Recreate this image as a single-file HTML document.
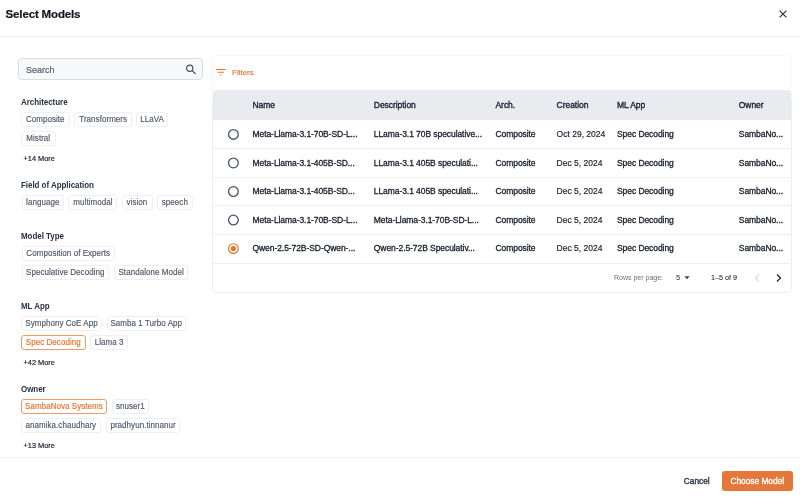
<!DOCTYPE html>
<html><head><meta charset="utf-8">
<style>
*{box-sizing:border-box;margin:0;padding:0}
html,body{width:800px;height:497px;}body{will-change:transform;overflow:hidden;background:#fff;font-family:"Liberation Sans",sans-serif;color:#101828}
div{position:absolute;white-space:nowrap}
svg{position:absolute}
.t{height:12px;line-height:12px}
.title{left:5.6px;top:7.3px;font-size:11.5px;font-weight:bold;letter-spacing:-0.15px;line-height:14px;height:14px;color:#0f1420;-webkit-text-stroke:0.2px #0f1420}
.sec{left:21px;font-size:8px;font-weight:bold;color:#273043;letter-spacing:-0.05px;transform:scaleY(1.13)}
.chip{height:15px;border:1px solid #edeff3;border-radius:3px;font-size:8px;color:#4f5869;-webkit-text-stroke:0.15px #4f5869;line-height:13px;text-align:center;letter-spacing:0.05px}
.chip.on{border-color:#eb9a6a;color:#e6732f;-webkit-text-stroke:0.15px #e6732f}
.chip span{display:block;transform:scaleY(1.13)}
.more{left:23.5px;font-size:7.4px;color:#161c2b;-webkit-text-stroke:0.18px #161c2b;transform:scaleY(1.08)}
.th{font-size:8.5px;color:#1d2230;-webkit-text-stroke:0.35px #1d2230;letter-spacing:-0.05px}
.td{font-size:8.5px;-webkit-text-stroke:0.3px #1a1f2c;letter-spacing:-0.07px;color:#1a1f2c}
.td.n{-webkit-text-stroke:0.18px #1c2130;color:#1c2130;letter-spacing:0}
.pg{font-size:7px;color:#687080}
</style></head><body>

<div class="title">Select Models</div>
<svg style="left:777.4px;top:8.2px" width="12" height="12" viewBox="0 0 12 12"><path d="M2.6 2.6L9.4 9.4M9.4 2.6L2.6 9.4" stroke="#2a3347" stroke-width="1.2" fill="none"/></svg>
<div style="left:0;top:36px;width:800px;height:1px;background:#eff0f3"></div>
<div style="left:18px;top:58px;width:184.5px;height:22px;border:1.5px solid #d9dce2;border-radius:3.5px;background:#f8f9fb"></div>
<div class="t" style="left:26px;top:63.5px;font-size:9px;color:#586174;-webkit-text-stroke:0.2px #586174;transform:scaleY(1.08)">Search</div>
<svg style="left:184px;top:63px" width="14" height="14" viewBox="0 0 14 14"><circle cx="5.7" cy="5.2" r="3.2" stroke="#465066" stroke-width="1.25" fill="none"/><path d="M8.1 7.6L11.3 10.6" stroke="#465066" stroke-width="1.3" stroke-linecap="round"/></svg>
<div class="t sec" style="top:96.50px">Architecture</div>
<div class="t sec" style="top:179.90px">Field of Application</div>
<div class="t sec" style="top:231.10px">Model Type</div>
<div class="t sec" style="top:300.50px">ML App</div>
<div class="t sec" style="top:383.50px">Owner</div>
<div class="chip" style="left:21.0px;top:111.5px;width:48.5px"><span>Composite</span></div>
<div class="chip" style="left:74.4px;top:111.5px;width:57.6px"><span>Transformers</span></div>
<div class="chip" style="left:136.3px;top:111.5px;width:31.7px"><span>LLaVA</span></div>
<div class="chip" style="left:21.0px;top:130.5px;width:34.5px"><span>Mistral</span></div>
<div class="chip" style="left:21.5px;top:194.7px;width:42.5px"><span>language</span></div>
<div class="chip" style="left:68.4px;top:194.7px;width:49.1px"><span>multimodal</span></div>
<div class="chip" style="left:121.5px;top:194.7px;width:31.0px"><span>vision</span></div>
<div class="chip" style="left:157.0px;top:194.7px;width:35.7px"><span>speech</span></div>
<div class="chip" style="left:21.5px;top:245.7px;width:93.5px"><span>Composition of Experts</span></div>
<div class="chip" style="left:21.5px;top:264.7px;width:87.6px"><span>Speculative Decoding</span></div>
<div class="chip" style="left:114.3px;top:264.7px;width:73.7px"><span>Standalone Model</span></div>
<div class="chip" style="left:21.0px;top:316.0px;width:81.0px"><span>Symphony CoE App</span></div>
<div class="chip" style="left:106.8px;top:316.0px;width:78.9px"><span>Samba 1 Turbo App</span></div>
<div class="chip on" style="left:21.0px;top:335.0px;width:64.6px"><span>Spec Decoding</span></div>
<div class="chip" style="left:90.4px;top:335.0px;width:37.6px"><span>Llama 3</span></div>
<div class="chip on" style="left:21.0px;top:398.5px;width:86.0px"><span>SambaNova Systems</span></div>
<div class="chip" style="left:111.6px;top:398.5px;width:37.4px"><span>snuser1</span></div>
<div class="chip" style="left:21.0px;top:418.0px;width:79.7px"><span>anamika.chaudhary</span></div>
<div class="chip" style="left:105.7px;top:418.0px;width:74.8px"><span>pradhyun.tinnanur</span></div>
<div class="t more" style="top:153.30px">+14 More</div>
<div class="t more" style="top:357.20px">+42 More</div>
<div class="t more" style="top:440.10px">+13 More</div>
<div style="left:212px;top:54.5px;width:580px;height:238px;border:1px solid #f7f8fa;border-radius:5px"></div>
<div style="left:212px;top:100px;width:580px;height:192.5px;border:1px solid #eceef2;border-top:none;border-radius:0 0 5px 5px"></div>
<svg style="left:214px;top:67px" width="14" height="10" viewBox="0 0 14 10"><path d="M1.9 2.5H11.6M3.4 5.3H9.9" stroke="#e4722d" stroke-width="1.05" fill="none"/><circle cx="6.75" cy="8.1" r="0.75" fill="#e4722d"/></svg>
<div class="t" style="left:232px;top:67px;font-size:8px;color:#e4722d;-webkit-text-stroke:0.15px #e4722d">Filters</div>
<div style="left:213px;top:90px;width:578px;height:30px;background:#e9ebef;border-radius:4px 4px 0 0"></div>
<div class="t th" style="left:252.5px;top:98.80px">Name</div>
<div class="t th" style="left:373.8px;top:98.80px">Description</div>
<div class="t th" style="left:495.5px;top:98.80px">Arch.</div>
<div class="t th" style="left:556.6px;top:98.80px">Creation</div>
<div class="t th" style="left:617.0px;top:98.80px">ML App</div>
<div class="t th" style="left:738.8px;top:98.80px">Owner</div>
<div style="left:213px;top:148.00px;width:578px;height:1px;background:#eef0f4"></div>
<svg style="left:227px;top:128px" width="13" height="13" viewBox="0 0 13 13"><circle cx="6.4" cy="6.40" r="4.85" stroke="#4a5468" stroke-width="1.3" fill="none"/></svg>
<div class="t td" style="left:252.5px;top:128px">Meta-Llama-3.1-70B-SD-L...</div>
<div class="t td" style="left:373.8px;top:128px">LLama-3.1 70B speculative...</div>
<div class="t td" style="left:495.5px;top:128px">Composite</div>
<div class="t td n" style="left:556.6px;top:128px">Oct 29, 2024</div>
<div class="t td" style="left:617.0px;top:128px">Spec Decoding</div>
<div class="t td" style="left:738.8px;top:128px">SambaNo...</div>
<div style="left:213px;top:176.65px;width:578px;height:1px;background:#eef0f4"></div>
<svg style="left:227px;top:156px" width="13" height="13" viewBox="0 0 13 13"><circle cx="6.4" cy="6.95" r="4.85" stroke="#4a5468" stroke-width="1.3" fill="none"/></svg>
<div class="t td" style="left:252.5px;top:157px">Meta-Llama-3.1-405B-SD...</div>
<div class="t td" style="left:373.8px;top:157px">LLama-3.1 405B speculati...</div>
<div class="t td" style="left:495.5px;top:157px">Composite</div>
<div class="t td n" style="left:556.6px;top:157px">Dec 5, 2024</div>
<div class="t td" style="left:617.0px;top:157px">Spec Decoding</div>
<div class="t td" style="left:738.8px;top:157px">SambaNo...</div>
<div style="left:213px;top:205.30px;width:578px;height:1px;background:#eef0f4"></div>
<svg style="left:227px;top:185px" width="13" height="13" viewBox="0 0 13 13"><circle cx="6.4" cy="6.50" r="4.85" stroke="#4a5468" stroke-width="1.3" fill="none"/></svg>
<div class="t td" style="left:252.5px;top:185px">Meta-Llama-3.1-405B-SD...</div>
<div class="t td" style="left:373.8px;top:185px">LLama-3.1 405B speculati...</div>
<div class="t td" style="left:495.5px;top:185px">Composite</div>
<div class="t td n" style="left:556.6px;top:185px">Dec 5, 2024</div>
<div class="t td" style="left:617.0px;top:185px">Spec Decoding</div>
<div class="t td" style="left:738.8px;top:185px">SambaNo...</div>
<div style="left:213px;top:233.95px;width:578px;height:1px;background:#eef0f4"></div>
<svg style="left:227px;top:214px" width="13" height="13" viewBox="0 0 13 13"><circle cx="6.4" cy="6.05" r="4.85" stroke="#4a5468" stroke-width="1.3" fill="none"/></svg>
<div class="t td" style="left:252.5px;top:214px">Meta-Llama-3.1-70B-SD-L...</div>
<div class="t td" style="left:373.8px;top:214px">Meta-Llama-3.1-70B-SD-L...</div>
<div class="t td" style="left:495.5px;top:214px">Composite</div>
<div class="t td n" style="left:556.6px;top:214px">Dec 5, 2024</div>
<div class="t td" style="left:617.0px;top:214px">Spec Decoding</div>
<div class="t td" style="left:738.8px;top:214px">SambaNo...</div>
<div style="left:213px;top:262.60px;width:578px;height:1px;background:#eef0f4"></div>
<svg style="left:227px;top:242px" width="13" height="13" viewBox="0 0 13 13"><circle cx="6.4" cy="6.60" r="4.85" stroke="#e4722d" stroke-width="1.2" fill="none"/><circle cx="6.4" cy="6.60" r="2.6" fill="#e4722d"/></svg>
<div class="t td" style="left:252.5px;top:242px">Qwen-2.5-72B-SD-Qwen-...</div>
<div class="t td" style="left:373.8px;top:242px">Qwen-2.5-72B Speculativ...</div>
<div class="t td" style="left:495.5px;top:242px">Composite</div>
<div class="t td n" style="left:556.6px;top:242px">Dec 5, 2024</div>
<div class="t td" style="left:617.0px;top:242px">Spec Decoding</div>
<div class="t td" style="left:738.8px;top:242px">SambaNo...</div>
<div class="t pg" style="left:614px;top:271.7px">Rows per page:</div>
<div class="t pg" style="left:676px;top:271.7px;color:#1f2533;font-size:7.5px">5</div>
<svg style="left:684px;top:276.4px" width="6" height="4" viewBox="0 0 6 4"><path d="M0.3 0.3H5.7L3 3.2Z" fill="#3a4252"/></svg>
<div class="t pg" style="left:711px;top:271.7px;color:#1f2533;font-size:7.2px;-webkit-text-stroke:0.1px #1f2533">1–5 of 9</div>
<svg style="left:754px;top:273.2px" width="6" height="10" viewBox="0 0 6 10"><path d="M4.8 1.5L1.5 5L4.8 8.5" stroke="#b9bdc6" stroke-width="1" fill="none"/></svg>
<svg style="left:776px;top:273.2px" width="6" height="10" viewBox="0 0 6 10"><path d="M1 1.5L4.5 5L1 8.5" stroke="#1f2533" stroke-width="1.3" fill="none"/></svg>
<div style="left:0;top:457px;width:800px;height:1px;background:#f1f2f5"></div>
<div class="t" style="left:683.8px;top:475px;font-size:8.3px;color:#384155;-webkit-text-stroke:0.45px #384155">Cancel</div>
<div style="left:722px;top:471px;width:70.5px;height:20px;background:#e4773a;border-radius:3px;color:#fff;font-size:8.3px;-webkit-text-stroke:0.3px #fff;text-align:center;line-height:20px">Choose Model</div>
</body></html>
